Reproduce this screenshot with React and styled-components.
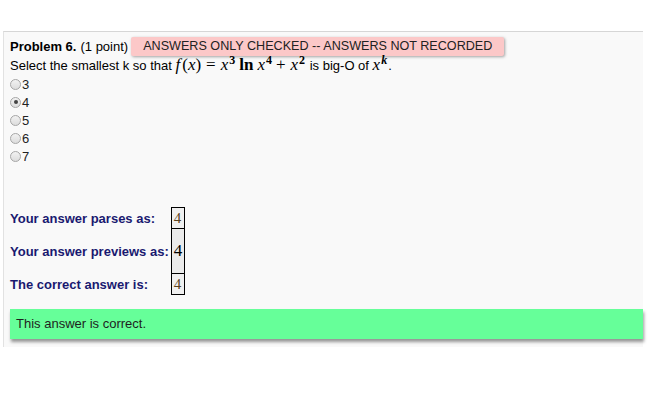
import React from 'react';
import styled, { createGlobalStyle } from 'styled-components';

const GlobalStyle = createGlobalStyle`
  body {
    margin: 0;
    background: #ffffff;
    font-family: "Liberation Sans", Arial, sans-serif;
    font-size: 13px;
    color: #000;
  }
`;

const Panel = styled.div`
  margin: 31px 0 0 3px;
  width: 633px;
  padding: 5px 0 8px 6px;
  background: #f9f9f9;
  border-top: 1px solid #d6d6d6;
  border-left: 1px solid #e2e2e2;
`;

const Header = styled.div`
  display: flex;
  align-items: center;
  height: 19px;
`;

const Title = styled.b`
  font-weight: bold;
  margin-right: 4px;
`;

const Badge = styled.span`
  margin-left: 3px;
  padding: 2px 12px;
  line-height: 15px;
  font-size: 12.6px;
  background: #fcc8c8;
  color: #222;
  border-radius: 2px;
  box-shadow: 1px 1px 3px rgba(0, 0, 0, 0.35);
`;

const Question = styled.div`
  height: 19px;
  line-height: 17px;
  white-space: nowrap;
`;

const Math = styled.span`
  font-family: "Liberation Serif", "Times New Roman", serif;
  font-size: 17px;
  font-style: ${p => (p.$op ? 'normal' : 'italic')};
  font-weight: ${p => (p.$bold ? 'bold' : 'normal')};
  margin: ${p => p.$space || '0'};
`;

const Sup = styled.sup`
  font-family: "Liberation Serif", "Times New Roman", serif;
  font-size: 12px;
  font-weight: bold;
  font-style: ${p => (p.$italic ? 'italic' : 'normal')};
  vertical-align: 0;
  position: relative;
  top: -6px;
  margin: 0 1px;
`;

const Choices = styled.div`
  display: flex;
  flex-direction: column;
`;

const Choice = styled.label`
  display: flex;
  align-items: center;
  height: 18px;
  color: #222;
`;

const Radio = styled.span`
  position: relative;
  width: 9px;
  height: 9px;
  margin-right: 1px;
  border-radius: 50%;
  border: 1px solid #a6a6a6;
  background: linear-gradient(#f2f2f2, #dcdcdc);

  &::after {
    content: '';
    display: ${p => (p.$checked ? 'block' : 'none')};
    position: absolute;
    left: 2.5px;
    top: 2.5px;
    width: 4px;
    height: 4px;
    border-radius: 50%;
    background: #444;
  }
`;

const Results = styled.table`
  margin-top: 42px;
  border-collapse: collapse;
  border-spacing: 0;
`;

const Label = styled.td`
  padding: 0 2px 0 0;
  height: ${p => p.$h}px;
  font-weight: bold;
  font-size: 13px;
  color: #191970;
  vertical-align: middle;
  white-space: nowrap;
`;

const Cell = styled.td`
  border: 1px solid #000;
  background: ${p => (p.$preview ? '#ebebeb' : '#f0f0f0')};
  padding: 0 2px;
  font-family: "Liberation Serif", "Times New Roman", serif;
  font-size: ${p => (p.$preview ? '17px' : '15px')};
  color: ${p => (p.$preview ? '#000' : '#5b4220')};
  vertical-align: middle;
`;

const Correct = styled.div`
  margin-top: 14px;
  height: 30px;
  line-height: 30px;
  padding-left: 6px;
  background: #66ff99;
  color: #1e1e1e;
  box-shadow: 1px 3px 3px rgba(0, 0, 0, 0.4);
`;

const choices = [3, 4, 5, 6, 7];

const rows = [
  { label: 'Your answer parses as:', height: 21 },
  { label: 'Your answer previews as:', height: 45, preview: true },
  { label: 'The correct answer is:', height: 21 },
];

export default function App() {
  return (
    <>
      <GlobalStyle />
      <Panel>
        <Header>
          <Title>Problem 6.</Title>
          <span>(1 point)</span>
          <Badge>ANSWERS ONLY CHECKED -- ANSWERS NOT RECORDED</Badge>
        </Header>
        <Question>
          Select the smallest k so that <Math $space="0 2px 0 0">f</Math>
          <Math $op>(</Math>
          <Math>x</Math>
          <Math $op>)</Math>
          <Math $op $space="0 5px">=</Math>
          <Math>x</Math>
          <Sup>3</Sup>
          <Math $op $bold $space="0 4px 0 3px">ln</Math>
          <Math>x</Math>
          <Sup>4</Sup>
          <Math $op $space="0 5px 0 3px">+</Math>
          <Math>x</Math>
          <Sup>2</Sup> is big-O of <Math>x</Math>
          <Sup $italic>k</Sup>.
        </Question>
        <Choices>
          {choices.map(n => (
            <Choice key={n}>
              <Radio $checked={n === 4} />
              {n}
            </Choice>
          ))}
        </Choices>
        <Results>
          <tbody>
            {rows.map(row => (
              <tr key={row.label}>
                <Label $h={row.height}>{row.label}</Label>
                <Cell $preview={row.preview}>4</Cell>
              </tr>
            ))}
          </tbody>
        </Results>
        <Correct>This answer is correct.</Correct>
      </Panel>
    </>
  );
}
